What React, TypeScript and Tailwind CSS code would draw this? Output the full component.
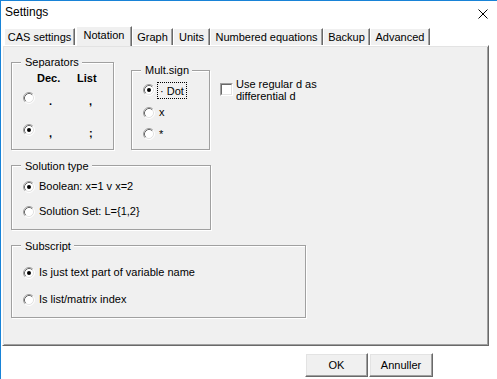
import React from "react";

function Radio({ checked }: { checked?: boolean }) {
  return (
    <svg width="12" height="12" viewBox="0 0 12 12" className="block shrink-0">
      <circle cx="6" cy="6" r="5" fill="#fff" />
      <path d="M2.11 9.89 A5.5 5.5 0 0 1 9.89 2.11" fill="none" stroke="#a0a0a0" />
      <path d="M9.89 2.11 A5.5 5.5 0 0 1 2.11 9.89" fill="none" stroke="#fff" />
      <path d="M2.82 9.18 A4.5 4.5 0 0 1 9.18 2.82" fill="none" stroke="#696969" />
      <path d="M9.18 2.82 A4.5 4.5 0 0 1 2.82 9.18" fill="none" stroke="#e3e3e3" />
      {checked && <circle cx="6" cy="6" r="2" fill="#000" />}
    </svg>
  );
}

function Group({
  label,
  className,
  labelClass,
  children,
}: {
  label: string;
  className: string;
  labelClass: string;
  children: React.ReactNode;
}) {
  return (
    <div className={`relative shrink-0 border border-[#a0a0a0] shadow-[inset_1px_1px_0_#fff,1px_1px_0_#fff] ${className}`}>
      <span className={`absolute left-[9px] bg-[#f0f0f0] pl-[4px] pr-[3px] whitespace-nowrap ${labelClass}`}>{label}</span>
      {children}
    </div>
  );
}

function Tab({ label, w, active }: { label: string; w: string; active?: boolean }) {
  if (active) {
    return (
      <div
        className={`relative z-10 h-[20px] shrink-0 border-l border-t border-r border-l-white border-t-white border-r-[#696969] bg-[#f0f0f0] pt-[2px] text-center shadow-[inset_-1px_0_0_#a0a0a0] ${w}`}
      >
        {label}
      </div>
    );
  }
  return (
    <div
      className={`mt-[2px] h-[17px] shrink-0 border-l border-t border-r border-l-white border-t-white border-r-[#696969] bg-[#f0f0f0] pt-[2px] text-center whitespace-nowrap shadow-[inset_-1px_0_0_#a0a0a0] ${w}`}
    >
      {label}
    </div>
  );
}

function Button({ label, w }: { label: string; w: string }) {
  return (
    <div
      className={`flex h-[24px] items-center justify-center border border-t-white border-l-white border-r-[#696969] border-b-[#696969] bg-[#f0f0f0] shadow-[inset_-1px_-1px_0_#a0a0a0,inset_1px_1px_0_#e3e3e3] ${w}`}
    >
      {label}
    </div>
  );
}

export default function App() {
  return (
    <div className="h-[379px] w-[497px] overflow-hidden border-l border-t border-[#1883d7] bg-white font-['Liberation_Sans',Arial,sans-serif] text-[11px] leading-[13px] text-black">
      {/* Title bar */}
      <div className="flex h-[25px] items-start justify-between pl-[4px] pr-[9px]">
        <span className="pt-[4px] text-[12px] leading-[14px]">Settings</span>
        <svg width="10" height="10" viewBox="0 0 10 10" className="mt-[8px] block">
          <path d="M0.5 0.5 L9.5 9.5 M9.5 0.5 L0.5 9.5" stroke="#000" strokeWidth="1" fill="none" />
        </svg>
      </div>

      {/* Tabs */}
      <div className="flex h-[19px] items-start pl-[3px]">
        <Tab label="CAS settings" w="w-[71px]" />
        <div className="w-[1px] shrink-0" />
        <Tab label="Notation" w="w-[56px]" active />
        <Tab label="Graph" w="w-[41px]" />
        <Tab label="Units" w="w-[37px]" />
        <Tab label="Numbered equations" w="w-[113px]" />
        <Tab label="Backup" w="w-[47px]" />
        <Tab label="Advanced" w="w-[60px]" />
      </div>

      {/* Panel */}
      <div className="ml-[1px] h-[301px] w-[487px] border border-t-white border-l-white border-r-[#696969] border-b-[#696969] bg-[#f0f0f0] pl-[8px] pt-[16px] shadow-[inset_1px_1px_0_#e3e3e3,inset_-1px_-1px_0_#a0a0a0]">
        <div className="flex items-start">
          <Group label="Separators" className="h-[88px] w-[103px]" labelClass="-top-[7px]">
            <div className="flex pl-[25px] pt-[9px] font-bold">
              <span className="w-[40px]">Dec.</span>
              <span>List</span>
            </div>
            <div className="mt-[7px] flex pl-[11px] font-bold">
              <Radio />
              <span className="ml-[14px] mt-[3px] w-[40px]">.</span>
              <span className="mt-[3px]">,</span>
            </div>
            <div className="mt-[16px] flex pl-[11px] font-bold">
              <Radio checked />
              <span className="ml-[14px] mt-[3px] w-[40px]">,</span>
              <span className="mt-[3px]">;</span>
            </div>
          </Group>

          <Group label="Mult.sign" className="ml-[17px] mt-[8px] h-[80px] w-[79px]" labelClass="-top-[7px]">
            <div className="flex items-start pl-[11px] pt-[11px]">
              <div className="mt-[2px]">
                <Radio checked />
              </div>
              <div className="ml-[2px] h-[17px] w-[30px] border border-dotted border-black pl-[2px] pt-[2px] whitespace-nowrap">
                · Dot
              </div>
            </div>
            <div className="mt-[7px] flex h-[13px] items-center pl-[11px]">
              <Radio />
              <span className="ml-[4px]">x</span>
            </div>
            <div className="mt-[8px] flex h-[13px] items-center pl-[11px]">
              <Radio />
              <span className="ml-[4px] mt-[2px]">*</span>
            </div>
          </Group>

          <div className="ml-[10px] mt-[16px] flex items-start">
            <div className="mt-[5px] h-[13px] w-[13px] shrink-0 border border-t-[#a0a0a0] border-l-[#a0a0a0] border-r-white border-b-white">
              <div className="h-full w-full border border-t-[#696969] border-l-[#696969] border-r-[#e3e3e3] border-b-[#e3e3e3] bg-white" />
            </div>
            <span className="ml-[3px] leading-[12px]">
              Use regular d as
              <br />
              differential d
            </span>
          </div>
        </div>

        <Group label="Solution type" className="mt-[15px] h-[65px] w-[200px]" labelClass="-top-[6px]">
          <div className="flex h-[13px] items-center pl-[11px] mt-[14px]">
            <Radio checked />
            <span className="ml-[4px]">Boolean: x=1 v x=2</span>
          </div>
          <div className="mt-[12px] flex h-[13px] items-center pl-[11px]">
            <Radio />
            <span className="ml-[4px]">Solution Set: L={"{1,2}"}</span>
          </div>
        </Group>

        <Group label="Subscript" className="mt-[15px] h-[73px] w-[295px]" labelClass="-top-[6px]">
          <div className="mt-[20px] flex h-[13px] items-center pl-[11px]">
            <Radio checked />
            <span className="ml-[4px]">Is just text part of variable name</span>
          </div>
          <div className="mt-[14px] flex h-[13px] items-center pl-[11px]">
            <Radio />
            <span className="ml-[4px]">Is list/matrix index</span>
          </div>
        </Group>
      </div>

      {/* Buttons */}
      <div className="mt-[7px] flex pl-[304px]">
        <Button label="OK" w="w-[63px]" />
        <div className="w-[1px]" />
        <Button label="Annuller" w="w-[64px]" />
      </div>
    </div>
  );
}
